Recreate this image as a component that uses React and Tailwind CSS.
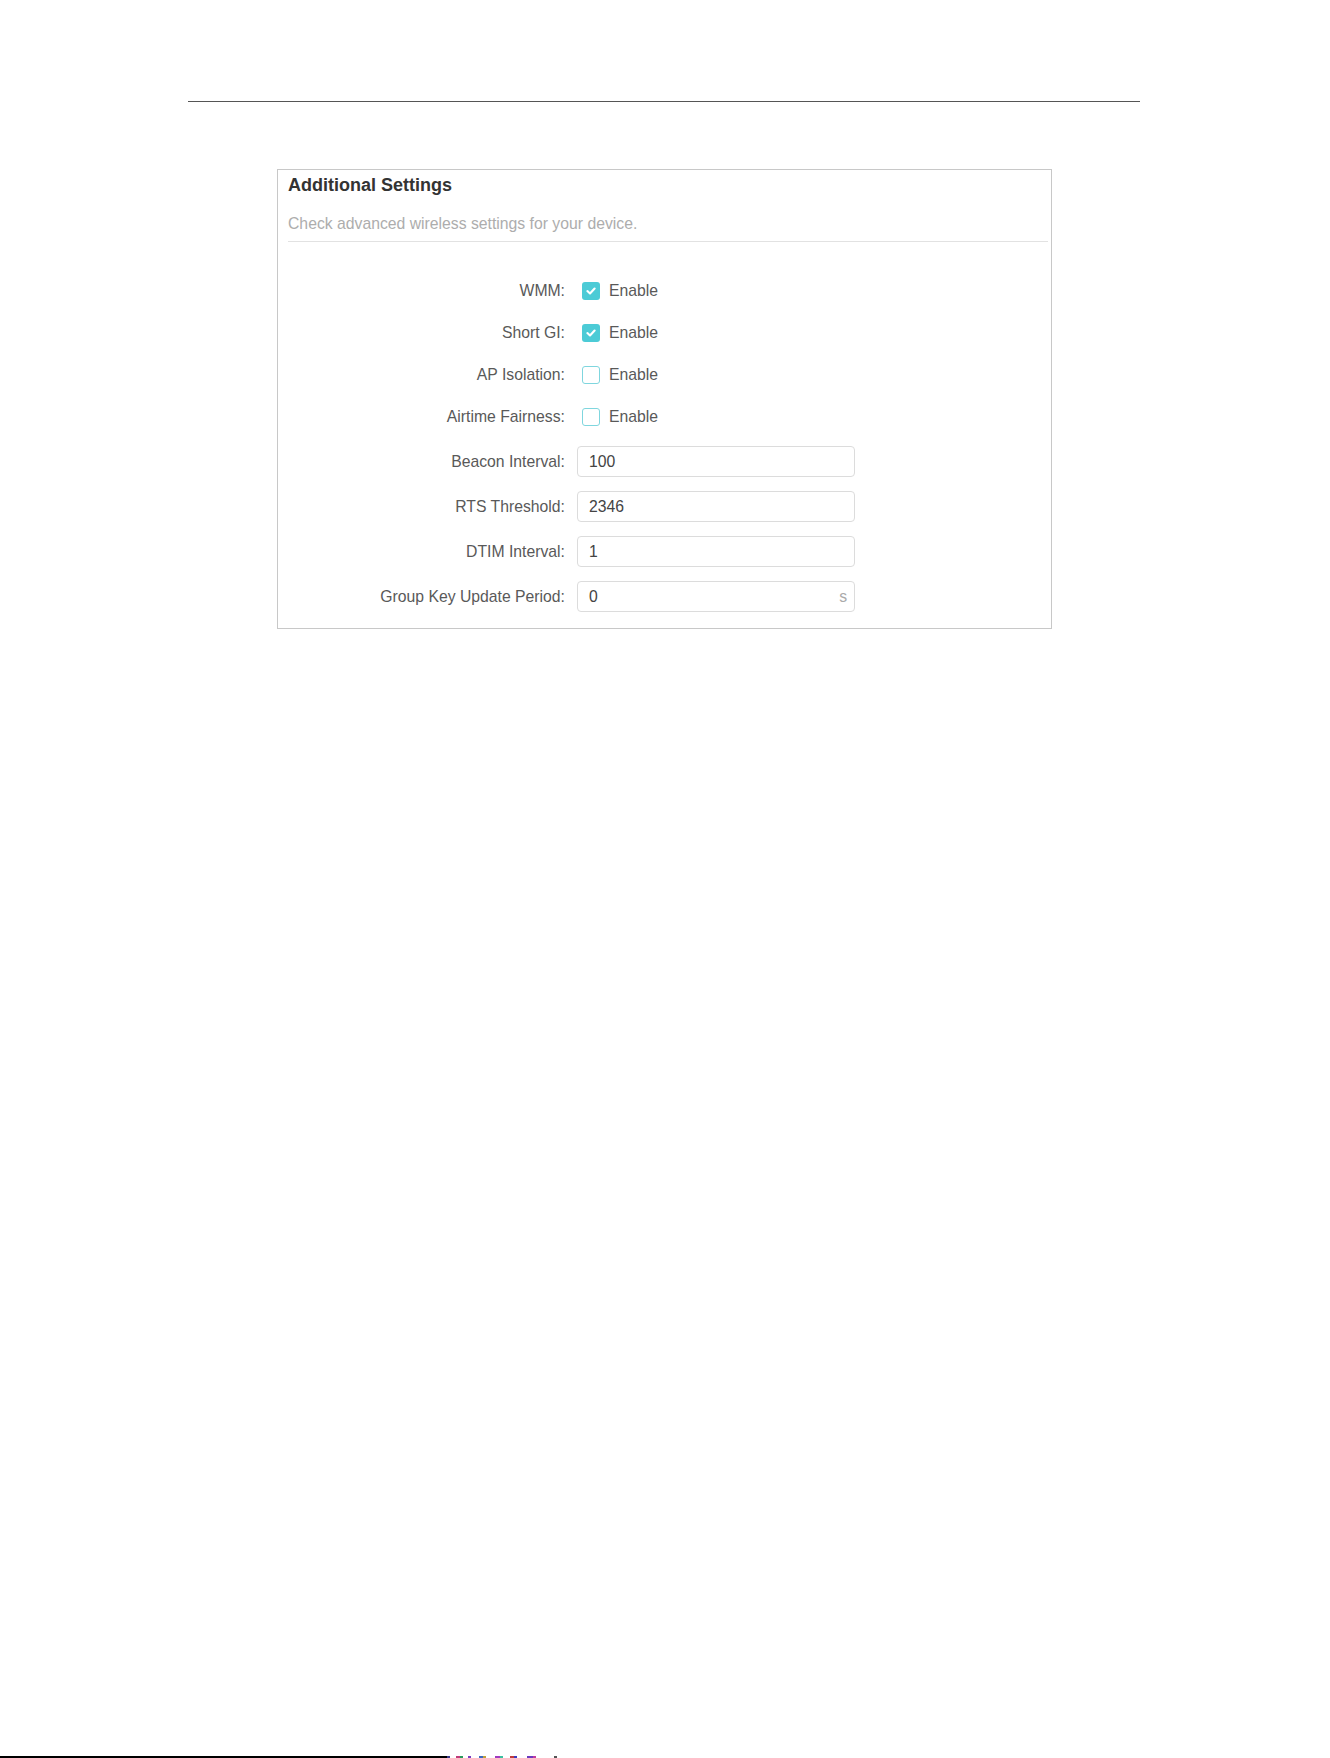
import React from "react";

const toggles = [
  { label: "WMM:", checked: true },
  { label: "Short GI:", checked: true },
  { label: "AP Isolation:", checked: false },
  { label: "Airtime Fairness:", checked: false },
];

const fields = [
  { label: "Beacon Interval:", value: "100" },
  { label: "RTS Threshold:", value: "2346" },
  { label: "DTIM Interval:", value: "1" },
  { label: "Group Key Update Period:", value: "0", unit: "s" },
];

// scan noise along the bottom edge of the page
const noise = [
  { w: "w-[3px]", c: "bg-[#3a3a8a]" },
  { w: "w-[6px]", c: "bg-white" },
  { w: "w-[4px]", c: "bg-[#c03a7a]" },
  { w: "w-[3px]", c: "bg-[#2a9a5a]" },
  { w: "w-[5px]", c: "bg-white" },
  { w: "w-[3px]", c: "bg-[#7a3ac0]" },
  { w: "w-[8px]", c: "bg-white" },
  { w: "w-[4px]", c: "bg-[#3a6ac0]" },
  { w: "w-[3px]", c: "bg-[#c0a03a]" },
  { w: "w-[9px]", c: "bg-white" },
  { w: "w-[5px]", c: "bg-[#a03ac0]" },
  { w: "w-[3px]", c: "bg-[#3ac0a0]" },
  { w: "w-[7px]", c: "bg-white" },
  { w: "w-[4px]", c: "bg-[#c03a3a]" },
  { w: "w-[3px]", c: "bg-[#3a3ac0]" },
  { w: "w-[10px]", c: "bg-white" },
  { w: "w-[6px]", c: "bg-[#6a3ac0]" },
  { w: "w-[3px]", c: "bg-[#c03aa0]" },
  { w: "w-[18px]", c: "bg-white" },
  { w: "w-[3px]", c: "bg-[#555]" },
];

function Checkbox({ checked }) {
  if (checked) {
    return (
      <span className="ml-[5px] flex h-[18px] w-[18px] items-center justify-center rounded-[3px] bg-[#4ccbd6]">
        <svg width="10" height="8" viewBox="0 0 10 8" fill="none">
          <polyline points="1.4,4.1 4,6.5 8.6,1.5" stroke="#fff" strokeWidth="2.1" strokeLinecap="round" strokeLinejoin="round" />
        </svg>
      </span>
    );
  }
  return <span className="ml-[5px] h-[18px] w-[18px] rounded-[3px] border border-[#7fd6de] bg-white" />;
}

export default function App() {
  return (
    <div className="flex h-[1758px] w-full flex-col bg-white font-['Liberation_Sans',Arial,sans-serif]">
      <div className="ml-[188px] mt-[101px] h-px w-[952px] bg-[#555]" />

      <section className="ml-[277px] mt-[67px] w-[775px] border border-[#c8c8c8]">
        <div className="pl-[10px] pr-[3px] pt-[3px]">
          <h2 className="text-[18px] font-bold leading-[24px] text-[#333]">Additional Settings</h2>
          <p className="mt-[15px] text-[15.75px] leading-[24px] text-[#adadad]">
            Check advanced wireless settings for your device.
          </p>
          <div className="mt-[5px] h-px bg-[#e2e2e2]" />
        </div>

        <div className="mt-[28px] pb-[9px] text-[15.75px] text-[#595959]">
          {toggles.map((t) => (
            <div key={t.label} className="flex h-[42px] items-center">
              <span className="w-[287px] text-right">{t.label}</span>
              <div className="ml-[12px] flex items-center">
                <Checkbox checked={t.checked} />
                <span className="ml-[9px]">Enable</span>
              </div>
            </div>
          ))}
          <div className="h-px" />
          {fields.map((f) => (
            <div key={f.label} className="flex h-[45px] items-center">
              <span className="w-[287px] text-right">{f.label}</span>
              <div className="ml-[12px] flex h-[31px] w-[278px] items-center rounded-[4px] border border-[#dcdcdc] pl-[11px] pr-[7px] text-[#444]">
                <span className="flex-1">{f.value}</span>
                {f.unit && <span className="text-[#aaa]">{f.unit}</span>}
              </div>
            </div>
          ))}
        </div>
      </section>

      <div className="mt-auto flex h-[2px]">
        <div className="w-[447px] bg-black" />
        {noise.map((n, i) => (
          <div key={i} className={`${n.w} ${n.c}`} />
        ))}
      </div>
    </div>
  );
}
